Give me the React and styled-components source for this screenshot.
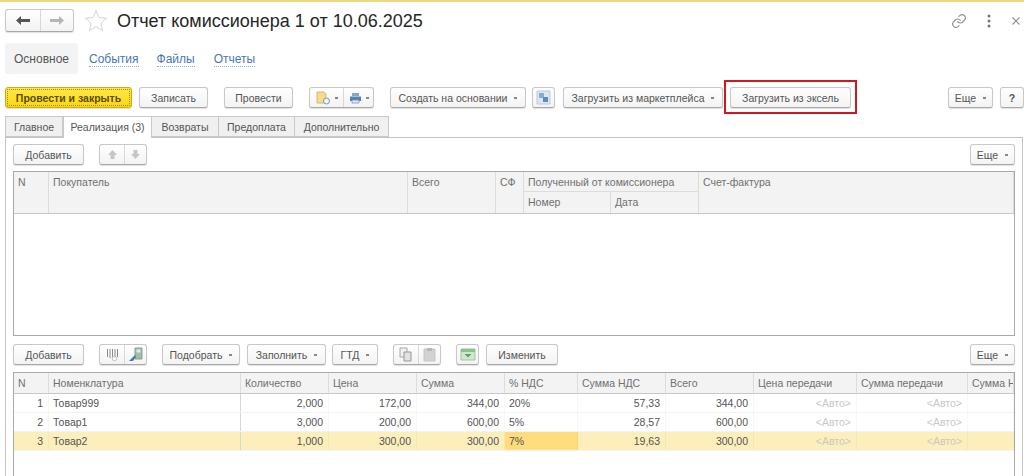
import React from 'react'
import styled, { createGlobalStyle } from 'styled-components'

const Global = createGlobalStyle`
  html, body { margin: 0; padding: 0; background: #fff; }
  body { font-family: "Liberation Sans", Arial, sans-serif; font-size: 10.5px; color: #555; }
`

const Page = styled.div`
  width: 1024px;
  height: 476px;
  overflow: hidden;
  background: #fff;
  border-top: 2px solid #efd77e;
  box-sizing: border-box;
  display: flex;
  flex-direction: column;
`

const TitleBar = styled.div`
  display: flex;
  align-items: center;
  height: 23px;
  margin-top: 7px;
  padding-left: 5px;
`

const ButtonGroup = styled.div`
  display: flex;
  height: ${p => p.$height || 21}px;
  margin-left: ${p => p.$gap || 0}px;
  border: 1px solid #c8c8c8;
  border-bottom-color: #a8a8a8;
  border-radius: 3px;
  background: linear-gradient(#ffffff, #f3f3f3);
  box-shadow: 0 1px 1px rgba(0, 0, 0, .12);
  box-sizing: border-box;
`

const GroupPart = styled.div`
  width: ${p => p.$w}px;
  display: flex;
  align-items: center;
  justify-content: center;
  gap: 4px;
  box-sizing: border-box;
  & + & { border-left: 1px solid #d8d8d8; }
`

const Title = styled.h1`
  margin: 2px 0 0 9px;
  font-size: 18px;
  font-weight: 400;
  color: #262626;
  white-space: nowrap;
`

const TitleActions = styled.div`
  margin-left: auto;
  display: flex;
  align-items: center;
  gap: 20px;
  padding-right: 3px;
`

const SectionNav = styled.nav`
  display: flex;
  align-items: center;
  height: 31px;
  margin: 11px 0 0 5px;
`

const SectionCurrent = styled.div`
  width: 73px;
  height: 31px;
  line-height: 33px;
  text-align: center;
  font-size: 12px;
  color: #555;
  background: #f3f3f3;
  border-radius: 3px;
`

const SectionLink = styled.a`
  margin: 2px 0 0 ${p => p.$gap}px;
  font-size: 12px;
  color: #4a76b5;
  border-bottom: 1px dotted #8aa8d4;
  line-height: 13px;
`

const Toolbar = styled.div`
  display: flex;
  align-items: center;
  height: 21px;
  margin-top: ${p => p.$top}px;
  padding-left: ${p => p.$left}px;
`

const Button = styled.button`
  width: ${p => p.$w}px;
  height: 21px;
  margin-left: ${p => p.$gap || 0}px;
  padding: 0;
  flex: none;
  display: flex;
  align-items: center;
  justify-content: center;
  gap: 7px;
  font: 400 10.5px "Liberation Sans", Arial, sans-serif;
  color: #555;
  border: 1px solid #c8c8c8;
  border-bottom-color: #a8a8a8;
  border-radius: 3px;
  background: linear-gradient(#ffffff, #f3f3f3);
  box-shadow: 0 1px 1px rgba(0, 0, 0, .12);
  box-sizing: border-box;
`

const PrimaryButton = styled(Button)`
  font-weight: 700;
  color: #5a4c00;
  border-color: #cbb000;
  background: linear-gradient(#ffe94a, #fdd612);
  outline: 1px dotted #9a8820;
  outline-offset: -3px;
`

const Caret = styled.span`
  width: 3px;
  height: 2px;
  background: #888;
  display: inline-block;
`

const Highlighted = styled.div`
  position: relative;
  margin-left: 7px;
  &::after {
    content: '';
    position: absolute;
    inset: -7px -6px -6px -6px;
    border: 2px solid #d2181f;
    pointer-events: none;
  }
`

const RightSide = styled.div`
  margin-left: auto;
  display: flex;
  padding-right: ${p => p.$right || 0}px;
`

const Tabs = styled.div`
  display: flex;
  height: 21px;
  margin: 8px 0 0 5px;
`

const Tab = styled.div`
  width: ${p => p.$w}px;
  height: ${p => (p.$active ? 22 : 21)}px;
  line-height: 21px;
  text-align: center;
  font-size: 10.5px;
  color: #555;
  background: ${p => (p.$active ? '#fff' : '#f0f0f0')};
  border: 1px solid #c9c9c9;
  border-bottom: ${p => (p.$active ? 'none' : '1px solid #c9c9c9')};
  border-left-width: ${p => (p.$first || p.$active ? 1 : 0)}px;
  box-sizing: border-box;
  position: relative;
  z-index: ${p => (p.$active ? 1 : 0)};
`

const TabPanel = styled.div`
  flex: 1;
  margin-left: 5px;
  margin-right: 1px;
  border: 1px solid #c4c4c4;
  border-bottom: none;
  padding-top: 6px;
  display: flex;
  flex-direction: column;
  min-height: 0;
`

const Grid = styled.div`
  margin: ${p => p.$top || 6}px 7px 0 7px;
  height: ${p => p.$h}px;
  border: 1px solid #a9a9a9;
  border-bottom-width: ${p => (p.$open ? 0 : 1)}px;
  box-sizing: border-box;
  flex: none;
  overflow: hidden;
`

const GridHead = styled.div`
  display: grid;
  grid-template-columns: ${p => p.$cols};
  grid-template-rows: ${p => p.$rows};
  background: #f3f3f3;
  border-bottom: 1px solid #c8c8c8;
`

const HeadCell = styled.div`
  grid-column: ${p => p.$col || 'auto'};
  grid-row: ${p => p.$row || 'auto'};
  padding: 4px 0 0 4px;
  font-size: 10.5px;
  line-height: 12px;
  color: #707070;
  border-right: 1px solid #dcdcdc;
  border-bottom: ${p => (p.$under ? '1px solid #dcdcdc' : 'none')};
  white-space: nowrap;
  overflow: hidden;
  box-sizing: border-box;
`

const Row = styled.div`
  display: grid;
  grid-template-columns: ${p => p.$cols};
  height: ${p => p.$h}px;
  background: ${p => (p.$selected ? '#fdefbc' : '#fff')};
  border-bottom: 1px solid #f3f3f3;
  box-sizing: border-box;
`

const Cell = styled.div`
  padding: 0 5px 0 4px;
  line-height: ${p => p.$line}px;
  font-size: 10.5px;
  text-align: ${p => (p.$right ? 'right' : 'left')};
  color: ${p => (p.$muted ? '#c8c8c8' : '#555')};
  background: ${p => (p.$current ? '#fedd7e' : 'transparent')};
  border-right: 1px solid ${p => (p.$strong ? '#d6d6d6' : 'rgba(0, 0, 0, .03)')};
  box-sizing: border-box;
  white-space: nowrap;
  overflow: hidden;
`

const BackIcon = ({ flip, color }) => (
  <svg width="16" height="11" viewBox="0 0 16 11" style={flip ? { transform: 'scaleX(-1)' } : undefined}>
    <path d="M1 5.500 6 1v3h9v3H6v3z" fill={color} />
  </svg>
)

const Star = () => (
  <svg width="24" height="23" viewBox="0 0 24 23" style={{ marginLeft: 10 }}>
    <path d="M12 1.500 15 8.600l7.600.6-5.800 5 1.800 7.400L12 17.700l-6.600 3.900 1.800-7.400-5.800-5L9 8.600z" fill="#fff" stroke="#d4d4d4" />
  </svg>
)

const LinkIcon = () => (
  <svg width="16" height="16" viewBox="0 0 24 24" fill="none" stroke="#8f8f8f" strokeWidth="1.700" strokeLinecap="round">
    <path d="M10 13a5 5 0 0 0 7.500.5l3-3a5 5 0 0 0-7-7l-1.700 1.700" />
    <path d="M14 11a5 5 0 0 0-7.500-.5l-3 3a5 5 0 0 0 7 7l1.700-1.700" />
  </svg>
)

const Dots = () => (
  <svg width="4" height="14" viewBox="0 0 4 14">
    <circle cx="2" cy="2" r="1.500" fill="#777" />
    <circle cx="2" cy="7" r="1.500" fill="#777" />
    <circle cx="2" cy="12" r="1.500" fill="#777" />
  </svg>
)

const Cross = () => (
  <svg width="10" height="10" viewBox="0 0 10 10">
    <path d="M1.500 1.500l7 7M8.500 1.500l-7 7" stroke="#8f8f8f" strokeWidth="1.100" />
  </svg>
)

const ReportIcon = () => (
  <svg width="15" height="14" viewBox="0 0 15 14">
    <path d="M1 1h7l2 2v9H1z" fill="#f3dc8c" stroke="#d6bb6a" />
    <circle cx="10.500" cy="10" r="3" fill="#eef3f9" stroke="#7d98bb" />
  </svg>
)

const PrintIcon = () => (
  <svg width="13" height="12" viewBox="0 0 13 12">
    <path d="M3 1h7v3H3z" fill="#8aa5c6" />
    <path d="M1 4.500h11v4.500H1z" fill="#5a80ae" />
    <path d="M3 8h7v3H3z" fill="#dfe7f1" stroke="#6a8bb4" strokeWidth=".7" />
  </svg>
)

const DocsIcon = () => (
  <svg width="15" height="15" viewBox="0 0 15 15">
    <path d="M1 1h13v13H1z" fill="#dbe6f2" stroke="#bccbdb" />
    <path d="M3 3h5v5H3z" fill="#86aed2" />
    <path d="M7 7h5v5H7z" fill="#5c8db8" />
  </svg>
)

const ArrowVertical = ({ down }) => (
  <svg width="11" height="11" viewBox="0 0 11 11" style={down ? { transform: 'scaleY(-1)' } : undefined}>
    <path d="M5.500 1 10 6H7.500v4h-4V6H1z" fill="#c2c8c2" />
  </svg>
)

const BarcodeIcon = () => (
  <svg width="13" height="14" viewBox="0 0 13 14">
    <path d="M1.500 1v8M4 1v9M6.500 1v10M9 1v9M11.500 1v8" stroke="#8a8a8a" strokeWidth="1" />
    <circle cx="8.500" cy="10.500" r="2.300" fill="#fff" fillOpacity=".6" stroke="#c4c4c4" />
  </svg>
)

const ScannerIcon = () => (
  <svg width="15" height="15" viewBox="0 0 15 15">
    <path d="M7 1h7v11H7z" fill="#a4bca4" stroke="#87a094" />
    <path d="M8.500 2.500h4v3h-4z" fill="#d9ecf5" />
    <path d="M7 8 1 14h4l3-4z" fill="#4e7aa8" />
  </svg>
)

const CopyIcon = () => (
  <svg width="14" height="15" viewBox="0 0 14 15">
    <path d="M1 1h7v9H1z" fill="#f2f2f2" stroke="#a8a8a8" />
    <path d="M5 5h7v9H5z" fill="#e2e2e2" stroke="#969696" />
  </svg>
)

const PasteIcon = () => (
  <svg width="13" height="15" viewBox="0 0 13 15">
    <path d="M1 2h11v12H1z" fill="#d2d2d2" stroke="#c6c6c6" />
    <path d="M4 1h5v3H4z" fill="#b8b8b8" />
  </svg>
)

const TrayIcon = () => (
  <svg width="16" height="13" viewBox="0 0 16 13">
    <path d="M1 1h14v11H1z" fill="#cfe6cf" stroke="#a3c2a3" />
    <path d="M1 1h14v3H1z" fill="#8cc08c" />
    <path d="M4.500 6h7L8 9.500z" fill="#5fa06c" />
  </svg>
)

const TOP_COLS = '35px 359px 88px 28px 87px 88px 1fr'
const BOTTOM_COLS = '35px 192px 88px 88px 88px 73px 88px 88px 103px 111px 1fr'

const goods = [
  { n: 1, name: 'Товар999', qty: '2,000', price: '172,00', sum: '344,00', vat: '20%', vatSum: '57,33', total: '344,00' },
  { n: 2, name: 'Товар1', qty: '3,000', price: '200,00', sum: '600,00', vat: '5%', vatSum: '28,57', total: '600,00' },
  { n: 3, name: 'Товар2', qty: '1,000', price: '300,00', sum: '300,00', vat: '7%', vatSum: '19,63', total: '300,00', selected: true },
]

export default function App() {
  return (
    <Page>
      <Global />
      <TitleBar>
        <ButtonGroup $height={23}>
          <GroupPart $w={34}><BackIcon color="#555" /></GroupPart>
          <GroupPart $w={33}><BackIcon flip color="#b5b5b5" /></GroupPart>
        </ButtonGroup>
        <Star />
        <Title>Отчет комиссионера 1 от 10.06.2025</Title>
        <TitleActions>
          <LinkIcon />
          <Dots />
          <Cross />
        </TitleActions>
      </TitleBar>

      <SectionNav>
        <SectionCurrent>Основное</SectionCurrent>
        <SectionLink $gap={11}>События</SectionLink>
        <SectionLink $gap={18}>Файлы</SectionLink>
        <SectionLink $gap={19}>Отчеты</SectionLink>
      </SectionNav>

      <Toolbar $top={13} $left={5}>
        <PrimaryButton $w={127}>Провести и закрыть</PrimaryButton>
        <Button $w={69} $gap={7}>Записать</Button>
        <Button $w={69} $gap={16}>Провести</Button>
        <ButtonGroup $gap={16}>
          <GroupPart $w={33}><ReportIcon /><Caret /></GroupPart>
          <GroupPart $w={30}><PrintIcon /><Caret /></GroupPart>
        </ButtonGroup>
        <Button $w={136} $gap={16}>Создать на основании <Caret /></Button>
        <Button $w={23} $gap={6}><DocsIcon /></Button>
        <Button $w={160} $gap={8}>Загрузить из маркетплейса <Caret /></Button>
        <Highlighted>
          <Button $w={121}>Загрузить из эксель</Button>
        </Highlighted>
        <RightSide>
          <Button $w={45}>Еще <Caret /></Button>
          <Button $w={24} $gap={7}><b>?</b></Button>
        </RightSide>
      </Toolbar>

      <Tabs>
        <Tab $w={58} $first>Главное</Tab>
        <Tab $w={89} $active>Реализация (3)</Tab>
        <Tab $w={67}>Возвраты</Tab>
        <Tab $w={76}>Предоплата</Tab>
        <Tab $w={94}>Дополнительно</Tab>
      </Tabs>

      <TabPanel>
        <Toolbar $top={0} $left={7}>
          <Button $w={71}>Добавить</Button>
          <ButtonGroup $gap={15}>
            <GroupPart $w={24}><ArrowVertical /></GroupPart>
            <GroupPart $w={22}><ArrowVertical down /></GroupPart>
          </ButtonGroup>
          <RightSide $right={7}>
            <Button $w={45}>Еще <Caret /></Button>
          </RightSide>
        </Toolbar>

        <Grid $h={165}>
          <GridHead $cols={TOP_COLS} $rows="20px 21px">
            <HeadCell $row="1 / 3">N</HeadCell>
            <HeadCell $row="1 / 3">Покупатель</HeadCell>
            <HeadCell $row="1 / 3">Всего</HeadCell>
            <HeadCell $row="1 / 3">СФ</HeadCell>
            <HeadCell $col="5 / 7" $under>Полученный от комиссионера</HeadCell>
            <HeadCell $col="7" $row="1 / 3">Счет-фактура</HeadCell>
            <HeadCell $col="5" $row="2">Номер</HeadCell>
            <HeadCell $col="6" $row="2">Дата</HeadCell>
          </GridHead>
        </Grid>

        <Toolbar $top={8} $left={7}>
          <Button $w={71}>Добавить</Button>
          <ButtonGroup $gap={15}>
            <GroupPart $w={24}><BarcodeIcon /></GroupPart>
            <GroupPart $w={22}><ScannerIcon /></GroupPart>
          </ButtonGroup>
          <Button $w={78} $gap={15}>Подобрать <Caret /></Button>
          <Button $w={79} $gap={7}>Заполнить <Caret /></Button>
          <Button $w={46} $gap={6}>ГТД <Caret /></Button>
          <ButtonGroup $gap={15}>
            <GroupPart $w={24}><CopyIcon /></GroupPart>
            <GroupPart $w={22}><PasteIcon /></GroupPart>
          </ButtonGroup>
          <Button $w={23} $gap={15}><TrayIcon /></Button>
          <Button $w={72} $gap={7}>Изменить</Button>
          <RightSide $right={7}>
            <Button $w={45}>Еще <Caret /></Button>
          </RightSide>
        </Toolbar>

        <Grid $h={105} $top={7} $open>
          <GridHead $cols={BOTTOM_COLS} $rows="20px">
            <HeadCell>N</HeadCell>
            <HeadCell>Номенклатура</HeadCell>
            <HeadCell>Количество</HeadCell>
            <HeadCell>Цена</HeadCell>
            <HeadCell>Сумма</HeadCell>
            <HeadCell>% НДС</HeadCell>
            <HeadCell>Сумма НДС</HeadCell>
            <HeadCell>Всего</HeadCell>
            <HeadCell>Цена передачи</HeadCell>
            <HeadCell>Сумма передачи</HeadCell>
            <HeadCell>Сумма Н</HeadCell>
          </GridHead>
          {goods.map(g => (
            <Row key={g.n} $cols={BOTTOM_COLS} $h={19} $selected={g.selected}>
              <Cell $line={18} $right>{g.n}</Cell>
              <Cell $line={18} $strong>{g.name}</Cell>
              <Cell $line={18} $right>{g.qty}</Cell>
              <Cell $line={18} $right>{g.price}</Cell>
              <Cell $line={18} $right>{g.sum}</Cell>
              <Cell $line={18} $current={g.selected}>{g.vat}</Cell>
              <Cell $line={18} $right>{g.vatSum}</Cell>
              <Cell $line={18} $right>{g.total}</Cell>
              <Cell $line={18} $right $muted>&lt;Авто&gt;</Cell>
              <Cell $line={18} $right $muted>&lt;Авто&gt;</Cell>
              <Cell $line={18} />
            </Row>
          ))}
        </Grid>
      </TabPanel>
    </Page>
  )
}
